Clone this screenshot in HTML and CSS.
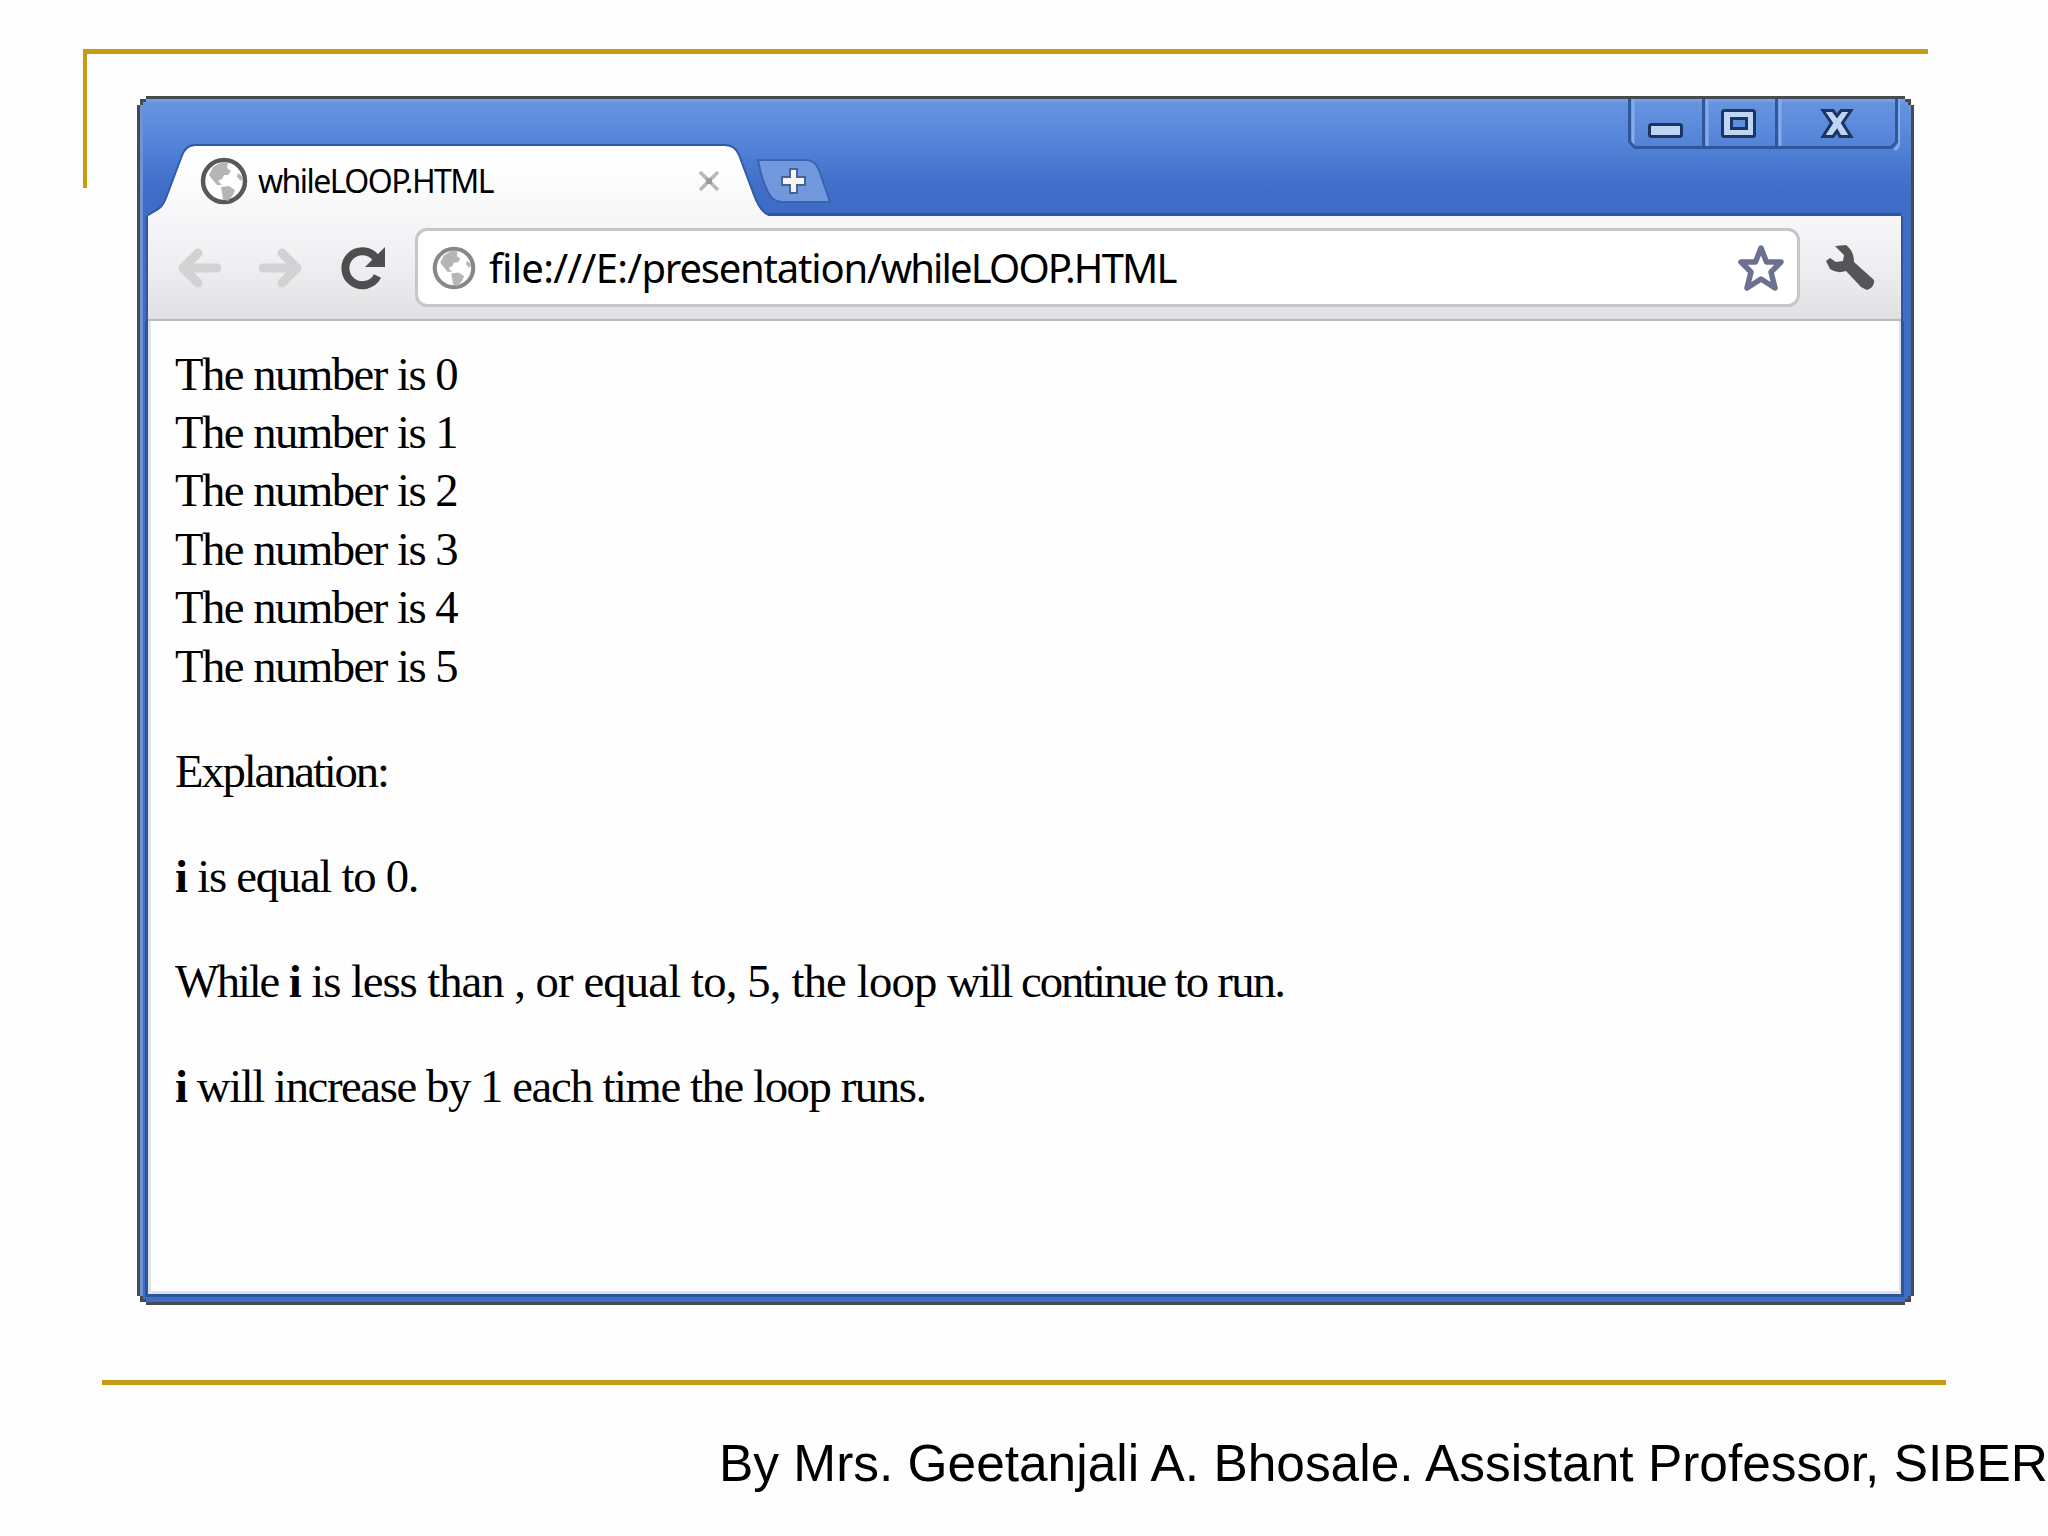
FILE: index.html
```html
<!DOCTYPE html>
<html lang="en">
<head>
<meta charset="utf-8">
<title>While loop output</title>
<link rel="stylesheet" href="styles.css">
</head>
<body>
<svg class="defs" width="0" height="0">
  <symbol id="globe" viewBox="0 0 48 48">
    <circle cx="24" cy="24" r="21" fill="#fff" stroke="currentColor" stroke-width="4.5"/>
    <path class="land" d="M13 10L22 5L28 6L27 11L31 14L28 18L24 18L22 22L18 24L22 28L17 28L12 22L9 18Z"/>
    <path class="land" d="M21 30L29 29L35 33L33 38L28 44L23 42Z"/>
    <path class="land" d="M38 16L43 20L41 24L37 20Z"/>
  </symbol>
</svg>
<main class="slide">
  <div class="bracket"></div>
  <section class="window">
    <div class="frame">
      <header class="titlebar">
        <div class="tab">
          <svg class="tab-shape" width="620" height="71" viewBox="0 0 620 71">
            <defs><linearGradient id="tabfill" x1="0" y1="0" x2="0" y2="1"><stop offset="0" stop-color="#fff"/><stop offset=".35" stop-color="#fefefe"/><stop offset="1" stop-color="#f7f6f8"/></linearGradient></defs>
            <path d="M0 71C9 65 14 65 18 54L33 14Q37 1 47 1H577Q587 1 591 11L606 51Q612 68 621 71Z" fill="url(#tabfill)"/>
            <path d="M0 70C9 64 14 64 18 53L33 13Q37 0 47 0H577Q587 0 591 10L606 50Q612 67 621 70" fill="none" stroke="#2f5ba8" stroke-width="2"/>
          </svg>
          <svg class="globe tab-globe"><use href="#globe"/></svg>
          <span class="tab-title">whileLOOP.HTML</span>
          <svg class="tab-close" width="22" height="22" viewBox="0 0 22 22"><path d="M2 2L20 20M20 2L2 20" stroke="#b8b8b8" stroke-width="3.500"/><rect x="8" y="8" width="6" height="6" fill="#9c9c9c"/></svg>
        </div>
        <svg class="new-tab" width="76" height="46" viewBox="0 0 76 46">
          <path d="M2 2H50Q59 2 63 12L74 44H26Q17 44 12 34Q5 20 2 2Z" fill="#7197dc" stroke="#3a64b2" stroke-width="2"/>
          <path d="M34 11H41V19H49V27H41V35H34V27H26V19H34Z" fill="#f6f5f1" stroke="#4a6290" stroke-width="2"/>
        </svg>
        <svg class="controls" width="272" height="52" viewBox="0 0 272 52">
          <g fill="none" stroke="#86abe8" stroke-width="3"><path d="M5 0V46M79 0V47M152 0V47M271 0V46L267 51"/></g>
          <path d="M1.500 0V43L7 48.500H263L268.500 43V0M75.500 0V48M148.500 0V48" fill="none" stroke="#2f589c" stroke-width="3"/>
          <g fill="#bfd5f6" stroke="#1a355f" stroke-width="3">
            <rect x="21.500" y="25.500" width="32" height="12" rx="2"/>
            <rect x="94.500" y="11.500" width="32" height="26" rx="2"/>
            <rect x="103.500" y="19.500" width="15" height="10" fill="#5f90df"/>
            <path d="M195 11.500H205L209 17L213 11.500H223L214.500 24L223 37.500H212L209 32L205 37.500H195L203.500 24Z"/>
          </g>
        </svg>
      </header>
      <nav class="toolbar">
        <svg class="arrow back" width="44" height="40" viewBox="0 0 44 40"><path d="M40 20H7M21 5L6 20L21 35" /></svg>
        <svg class="arrow forward" width="44" height="40" viewBox="0 0 44 40"><path d="M4 20H37M23 5L38 20L23 35" /></svg>
        <svg class="reload" width="46" height="46" viewBox="0 0 46 46">
          <path d="M36 13A17 17 0 1 0 37.500 31" fill="none" stroke="#4e4e50" stroke-width="8"/>
          <path d="M45 2V22H25Z" fill="#4e4e50"/>
        </svg>
        <div class="omnibox">
          <svg class="globe url-globe"><use href="#globe"/></svg>
          <span class="url"><span class="scheme">file:///E:/</span><span class="folder">presentation/</span><span class="file">whileLOOP.HTML</span></span>
          <svg class="star" width="50" height="50" viewBox="0 0 50 50"><path d="M25 5L30.500 19H45L35 29L39 45L25 36L11 45L15 29L5 19H19.500Z" fill="#fff" stroke="#6c7190" stroke-width="5.500" stroke-linejoin="round"/></svg>
        </div>
        <svg class="wrench" width="52" height="48" viewBox="0 0 52 48"><path d="M10 2L21 1Q29 7 29 18L49 36Q50 43 42 46L36 43L21 27Q12 30 5 25L1 17L5 14L11 18L18 17L19 11Z" fill="#555557"/></svg>
      </nav>
      <article class="page">
        <div class="line">The number is 0</div>
        <div class="line">The number is 1</div>
        <div class="line">The number is 2</div>
        <div class="line">The number is 3</div>
        <div class="line">The number is 4</div>
        <div class="line">The number is 5</div>
        <p class="explanation">Explanation:</p>
        <p class="equal"><b>i</b> is equal to 0.</p>
        <p class="while"><span class="lead">While</span> <b>i</b> is less than , <span class="loose">or equal to, 5, the loop </span><span class="tight">will continue </span><span class="tail">to run.</span></p>
        <p class="increase"><b>i</b> will increase by 1 each time the loop runs.</p>
      </article>
    </div>
  </section>
  <hr class="rule">
  <footer class="credit">By Mrs. Geetanjali A. Bhosale. Assistant Professor, SIBER</footer>
</main>
</body>
</html>
```
FILE: styles.css
```css
* { box-sizing: border-box; }
body { margin: 0; background: #fefefe; }
svg { display: block; flex: none; }
.defs { position: absolute; }
.land { fill: #b5b5b5; }
.slide {
  position: relative;
  display: flex;
  flex-direction: column;
  width: 2048px;
  height: 1536px;
  padding-top: 96px;
  overflow: hidden;
}
.bracket {
  position: absolute;
  left: 83px;
  top: 49px;
  width: 1845px;
  height: 139px;
  border-top: 5px solid #c69c14;
  border-left: 4px solid #c69c14;
}
.window {
  position: relative;
  flex: none;
  width: 1777px;
  height: 1209px;
  margin-left: 137px;
  padding: 3px;
  background: #474a4f;
  clip-path: polygon(9px 0, calc(100% - 9px) 0, calc(100% - 9px) 3px, calc(100% - 3px) 3px, calc(100% - 3px) 9px, 100% 9px, 100% calc(100% - 9px), calc(100% - 3px) calc(100% - 9px), calc(100% - 3px) calc(100% - 3px), calc(100% - 9px) calc(100% - 3px), calc(100% - 9px) 100%, 9px 100%, 9px calc(100% - 3px), 3px calc(100% - 3px), 3px calc(100% - 9px), 0 calc(100% - 9px), 0 9px, 3px 9px, 3px 3px, 9px 3px);
}
.frame {
  display: flex;
  flex-direction: column;
  height: 100%;
  padding: 0 10px 8px 8px;
  background: linear-gradient(#7ea4e6 0, #6693e0 4px, #5d8cdc 25px, #5080d6 52px, #4673cd 75px, #3f6cc6 95px, #3f6dc6 100%);
  box-shadow: inset 3px 0 #6d94da;
  clip-path: polygon(6px 0, calc(100% - 6px) 0, calc(100% - 6px) 3px, calc(100% - 3px) 3px, calc(100% - 3px) 6px, 100% 6px, 100% calc(100% - 6px), calc(100% - 3px) calc(100% - 6px), calc(100% - 3px) calc(100% - 3px), calc(100% - 6px) calc(100% - 3px), calc(100% - 6px) 100%, 6px 100%, 6px calc(100% - 3px), 3px calc(100% - 3px), 3px calc(100% - 6px), 0 calc(100% - 6px), 0 6px, 3px 6px, 3px 3px, 6px 3px);
}
.titlebar {
  display: flex;
  flex: none;
  height: 117px;
  box-shadow: inset 0 -3px #2f55a2;
}
.tab {
  position: relative;
  display: flex;
  align-items: center;
  width: 608px;
  height: 71px;
  margin-top: 46px;
  padding: 0 36px 0 52px;
}
.tab-shape { position: absolute; left: 0; top: 0; overflow: visible; }
.globe { position: relative; color: #58585a; }
.tab-globe { width: 48px; height: 48px; }
.tab-title {
  position: relative;
  flex: 1;
  margin-left: 10px;
  padding-top: 1px;
  font: 32px/48px "Noto Sans", sans-serif;
  letter-spacing: -1.55px;
  color: #000;
}
.tab-close { position: relative; }
.new-tab { margin: 59px 0 0; }
.controls { margin: 0 1px 0 auto; }
.toolbar {
  display: flex;
  align-items: center;
  flex: none;
  height: 105px;
  padding: 0 25px 0 29px;
  background: linear-gradient(#f7f7f9, #eeedf0 50%, #e1e0e3);
  border-bottom: 2px solid #b9b8ba;
  box-shadow: 0 0 0 2px #2f55a2;
  clip-path: inset(0 -2px 0 -2px);
}
.arrow path { fill: none; stroke: #d2d2d4; stroke-width: 9; stroke-linecap: round; stroke-linejoin: round; }
.forward { margin-left: 38px; }
.reload { margin-left: 37px; }
.omnibox {
  display: flex;
  align-items: center;
  flex: none;
  width: 1385px;
  height: 79px;
  margin-left: 29px;
  padding: 0 11px 0 14px;
  background: #fff;
  border: 3px solid #c6c5c9;
  border-radius: 12px;
}
.url-globe { width: 44px; height: 44px; color: #88888a; }
.url {
  flex: 1;
  margin-left: 13px;
  font: 40px/60px "Noto Sans", sans-serif;
  color: #000;
}
.scheme { letter-spacing: -0.7px; }
.folder { letter-spacing: -1.2px; }
.file { letter-spacing: -1.85px; }
.wrench { margin-left: 25px; }
.page {
  flex: 1;
  padding: 23.500px 24px 0;
  background: #fefefe;
  border: solid #dfe3e0;
  border-width: 0 2px 3px 3px;
  box-shadow: 0 0 0 3px #2c55a0;
  clip-path: inset(0 -3px -3px -3px);
  font: 46.700px/58.400px "Liberation Serif", serif;
  letter-spacing: -1.5px;
  color: #000;
  white-space: nowrap;
}
.page p { margin: 46.700px 0 0; }
.page .explanation { letter-spacing: -2.15px; }
.page .equal { letter-spacing: -1.25px; }
.page .while { letter-spacing: -1.05px; }
.page .lead { letter-spacing: -2.2px; }
.page .loose { letter-spacing: -0.85px; }
.page .tight { letter-spacing: -2.1px; }
.page .tail { letter-spacing: -1.75px; }
.page .increase { letter-spacing: -1.41px; }
.rule {
  flex: none;
  width: 1844px;
  height: 5px;
  margin: 75px 0 0 102px;
  border: 0;
  background: #c69c14;
}
.credit {
  margin: 48px 0 0 719px;
  font: 51.430px/60px "Liberation Sans", Arial, sans-serif;
  color: #000;
  white-space: nowrap;
}
```
